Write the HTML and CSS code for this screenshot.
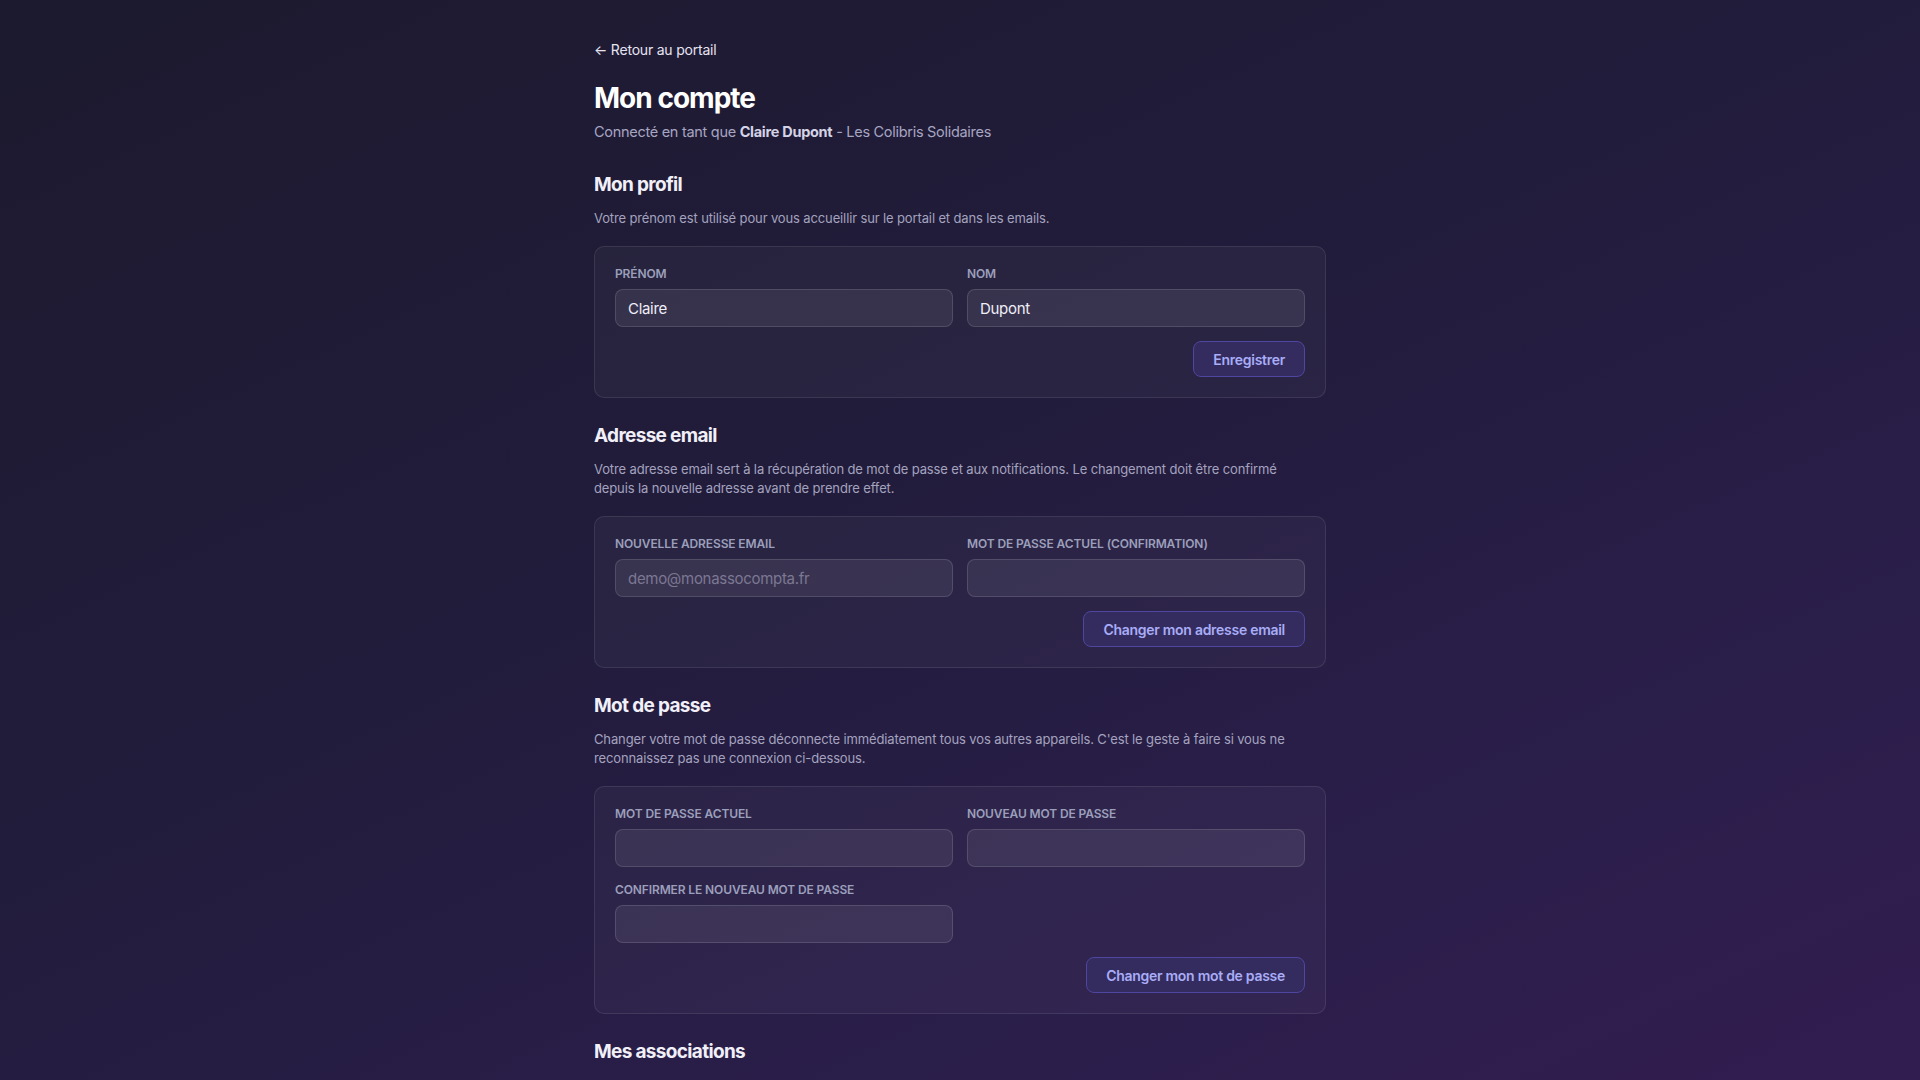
FILE: index.html
```html
<!DOCTYPE html>
<html lang="fr">
<head>
<meta charset="utf-8">
<title>Mon compte</title>
<link rel="stylesheet" href="styles.css">
</head>
<body>
<main class="page">
  <a class="back" href="#">← Retour au portail</a>
  <h1 class="title">Mon compte</h1>
  <p class="subtitle">Connecté en tant que <strong>Claire Dupont</strong> - Les Colibris Solidaires</p>

  <section class="section">
    <h2 class="section-title">Mon profil</h2>
    <p class="section-desc">Votre prénom est utilisé pour vous accueillir sur le portail et dans les emails.</p>
    <div class="card">
      <div class="grid">
        <label class="field"><span class="label">Prénom</span><input class="input" type="text" value="Claire"></label>
        <label class="field"><span class="label">Nom</span><input class="input" type="text" value="Dupont"></label>
      </div>
      <div class="actions"><button class="btn">Enregistrer</button></div>
    </div>
  </section>

  <section class="section">
    <h2 class="section-title">Adresse email</h2>
    <p class="section-desc">Votre adresse email sert à la récupération de mot de passe et aux notifications. Le changement doit être confirmé depuis la nouvelle adresse avant de prendre effet.</p>
    <div class="card">
      <div class="grid">
        <label class="field"><span class="label">Nouvelle adresse email</span><input class="input" type="email" placeholder="demo@monassocompta.fr"></label>
        <label class="field"><span class="label">Mot de passe actuel (confirmation)</span><input class="input" type="password"></label>
      </div>
      <div class="actions"><button class="btn">Changer mon adresse email</button></div>
    </div>
  </section>

  <section class="section">
    <h2 class="section-title">Mot de passe</h2>
    <p class="section-desc">Changer votre mot de passe déconnecte immédiatement tous vos autres appareils. C'est le geste à faire si vous ne reconnaissez pas une connexion ci-dessous.</p>
    <div class="card">
      <div class="grid">
        <label class="field"><span class="label">Mot de passe actuel</span><input class="input" type="password"></label>
        <label class="field"><span class="label">Nouveau mot de passe</span><input class="input" type="password"></label>
        <label class="field"><span class="label">Confirmer le nouveau mot de passe</span><input class="input" type="password"></label>
      </div>
      <div class="actions"><button class="btn">Changer mon mot de passe</button></div>
    </div>
  </section>

  <section class="section">
    <h2 class="section-title">Mes associations</h2>
  </section>
</main>
</body>
</html>
```
FILE: styles.css
```css
* { box-sizing: border-box; }
html, body { margin: 0; height: 100%; }
body {
  font-family: Inter, "Noto Sans", sans-serif;
  color: #ecebf5;
  background: linear-gradient(155deg, #1c1a2e 0%, #221c3c 45%, #2a1e4a 75%, #321d50 100%);
  background-attachment: fixed;
  min-height: 1080px;
  overflow: hidden;
  letter-spacing: -0.01em;
}
.page {
  width: 732px;
  margin: 0 auto;
  padding-top: 40px;
  display: flex;
  flex-direction: column;
}
.back {
  color: #e6e4f2;
  text-decoration: none;
  font-size: 14px;
  line-height: 20px;
  align-self: flex-start;
  letter-spacing: -0.015em;
}
.title {
  margin: 20px 0 0;
  font-size: 28px;
  line-height: 36px;
  font-weight: 700;
  color: #ffffff;
  letter-spacing: -0.035em;
}
.subtitle {
  margin: 5px 0 0;
  font-size: 14.5px;
  line-height: 22px;
  color: #a7a6c2;
  letter-spacing: -0.02em;
}
.subtitle strong { color: #d4d3e6; font-weight: 700; }
.section { margin-top: 26px; }
.section:first-of-type { margin-top: 30px; }
.section-title {
  margin: 0;
  font-size: 19px;
  line-height: 24px;
  font-weight: 700;
  color: #f1f0f8;
  letter-spacing: -0.035em;
}
.section-desc {
  margin: 12px 0 0;
  max-width: 705px;
  font-size: 13px;
  line-height: 19px;
  color: #a4a3bf;
  letter-spacing: -0.01em;
}
.card {
  margin-top: 18px;
  padding: 20px;
  border: 1px solid rgba(255, 255, 255, 0.09);
  border-radius: 10px;
  background: rgba(255, 255, 255, 0.035);
}
.grid {
  display: grid;
  grid-template-columns: 1fr 1fr;
  column-gap: 14px;
  row-gap: 16px;
}
.field { display: flex; flex-direction: column; gap: 8px; }
.label {
  font-size: 12px;
  line-height: 14px;
  font-weight: 600;
  text-transform: uppercase;
  color: #9b9fbb;
  letter-spacing: -0.01em;
}
.input {
  height: 38px;
  padding: 0 12px;
  border: 1px solid rgba(255, 255, 255, 0.13);
  border-radius: 8px;
  background: rgba(255, 255, 255, 0.07);
  color: #efeef7;
  font-family: inherit;
  font-size: 15px;
  letter-spacing: -0.02em;
  outline: none;
}
.input::placeholder { color: #7c7893; }
.actions { display: flex; justify-content: flex-end; margin-top: 14px; }
.btn {
  height: 36px;
  padding: 0 19px;
  border: 1px solid #4e46a0;
  border-radius: 8px;
  background: #342c5e;
  color: #a9acf7;
  font-family: inherit;
  font-size: 14px;
  font-weight: 600;
  letter-spacing: -0.02em;
  cursor: pointer;
}
```
